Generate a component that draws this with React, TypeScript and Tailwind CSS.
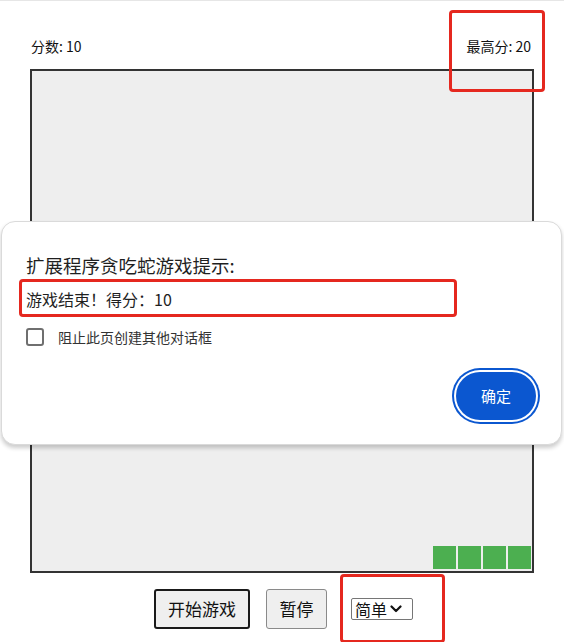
import React from "react";

const font = { fontFamily: '"Noto Sans CJK SC", "Noto Sans", sans-serif' };

export default function App() {
  const snake = [16, 17, 18, 19];
  return (
    <div
      className="relative w-[564px] h-[642px] overflow-hidden bg-white border-t border-[#e6e6e6] text-[#111]"
      style={font}
    >
      <div className="flex flex-col items-center pt-[34px]">
        <div className="w-[504px] h-[22px] flex justify-between items-center pl-[1px] pr-[3px] text-[14px] leading-[22px]">
          <span>分数: 10</span>
          <span>最高分: 20</span>
        </div>
        <div className="relative mt-[12px] w-[504px] h-[504px] border-2 border-[#333] bg-[#eeeeee]">
          {snake.map((c) => (
            <div
              key={c}
              className="absolute w-[23px] h-[23px] bg-[#4caf50]"
              style={{ left: c * 25 + 1, top: 19 * 25 }}
            />
          ))}
        </div>
        <div className="mt-[16px] flex items-center pl-[3px]">
          <button className="h-[40px] w-[96px] border-2 border-[#1a1a1a] rounded-[3px] bg-[#efefef] text-[17px] text-[#111]">
            开始游戏
          </button>
          <button className="ml-[16px] h-[40px] w-[61px] border border-[#8a8a8a] rounded-[3px] bg-[#efefef] text-[17px] text-[#111]">
            暂停
          </button>
          <div className="ml-[24px] h-[22px] w-[62px] border border-[#767676] rounded-[2px] bg-white flex items-center pl-[3px] gap-[3px] text-[16px] leading-none">
            <span>简单</span>
            <svg width="12" height="8" viewBox="0 0 12 8">
              <path d="M1.5 1.5 L6 6 L10.5 1.5" fill="none" stroke="#111" strokeWidth="2.2" strokeLinecap="round" strokeLinejoin="round" />
            </svg>
          </div>
        </div>
      </div>

      {/* dialog */}
      <div className="absolute left-[1px] top-[220px] w-[561px] h-[224px] bg-white rounded-[14px] border border-[#dadada] shadow-[0_3px_4px_rgba(0,0,0,0.2)] pl-[24px] pr-[24px] pt-[31px]">
        <div className="text-[18.5px] leading-[24px] text-[#1f1f1f]">扩展程序贪吃蛇游戏提示:</div>
        <div className="mt-[11px] text-[16px] leading-[22px] text-[#1f1f1f]">游戏结束！得分：10</div>
        <div className="mt-[17px] flex items-center h-[20px]">
          <div className="w-[18px] h-[18px] border-2 border-[#6f6f6f] rounded-[3px]" />
          <span className="ml-[14px] text-[14px] text-[#333]">阻止此页创建其他对话框</span>
        </div>
        <div className="absolute right-[25px] bottom-[24px]">
          <button className="w-[80px] h-[48px] rounded-full bg-[#0b57d0] text-white text-[15px] shadow-[0_0_0_2px_#fff,0_0_0_4px_#0b57d0]">
            确定
          </button>
        </div>
      </div>

      {/* red annotation boxes */}
      <div className="absolute left-[449px] top-[9px] w-[96px] h-[82px] border-[3px] border-[#e5281f] rounded-[4px]" />
      <div className="absolute left-[19px] top-[278px] w-[438px] h-[38px] border-[3px] border-[#e5281f] rounded-[4px]" />
      <div className="absolute left-[340px] top-[573px] w-[105px] h-[69px] border-[3px] border-[#e5281f] rounded-[4px]" />
    </div>
  );
}
